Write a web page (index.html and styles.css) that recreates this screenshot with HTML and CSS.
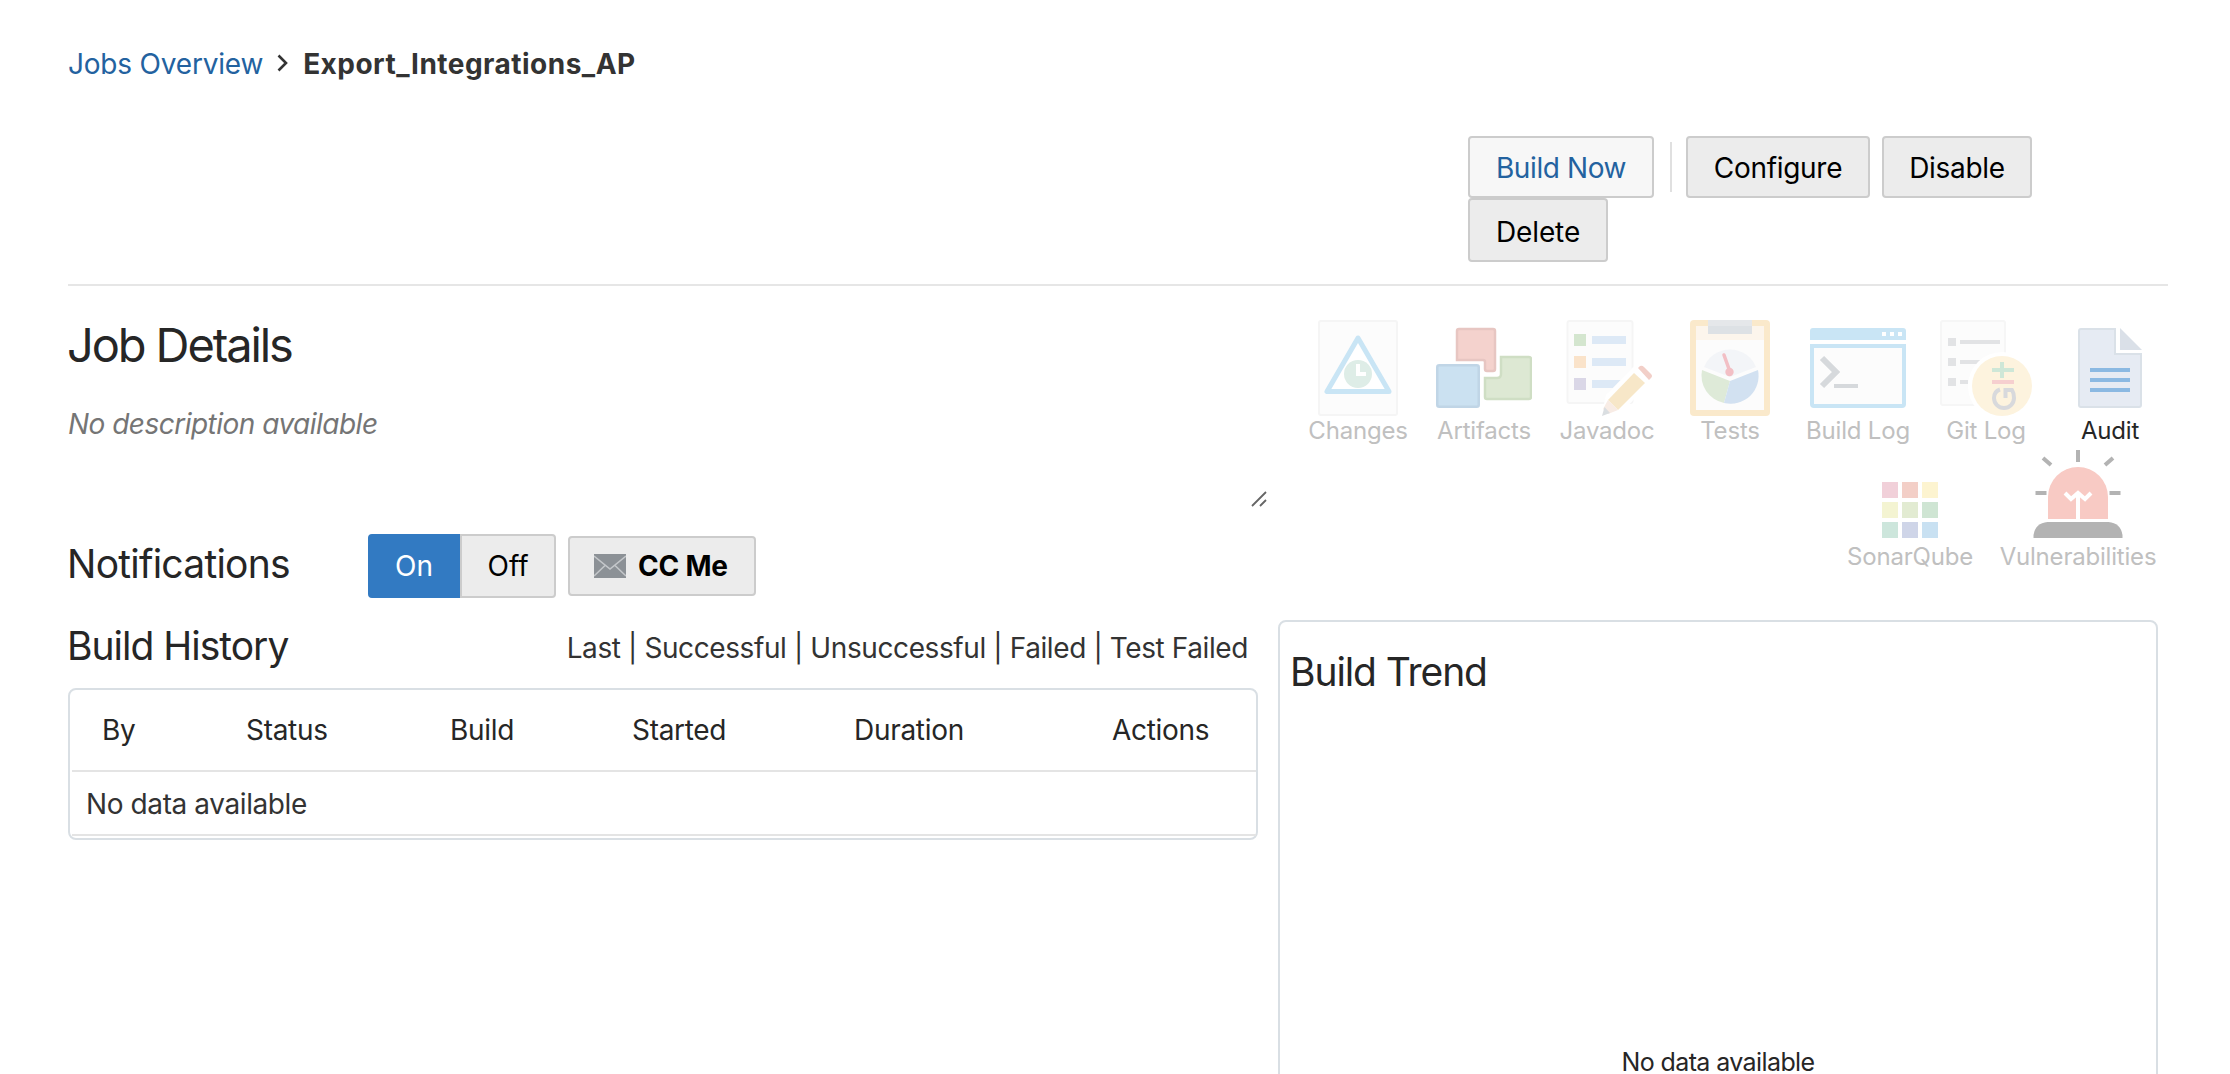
FILE: index.html
```html
<!DOCTYPE html>
<html lang="en">
<head>
<meta charset="utf-8">
<title>Export_Integrations_AP</title>
<link rel="stylesheet" href="styles.css">
</head>
<body>
<div class="page">
  <nav class="breadcrumb">
    <a class="crumb-link" href="#">Jobs Overview</a>
    <svg class="crumb-arrow" width="12" height="18" viewBox="0 0 12 18"><path d="M1.500 1.500 9 9l-7.500 7.500" fill="none" stroke="#333" stroke-width="2.600"/></svg>
    <span class="crumb-current">Export_Integrations_AP</span>
  </nav>

  <div class="toolbar">
    <div class="toolbar-row">
      <button class="btn btn-primary build">Build Now</button>
      <span class="separator"></span>
      <button class="btn configure">Configure</button>
      <button class="btn disable">Disable</button>
    </div>
    <button class="btn delete">Delete</button>
  </div>

  <main class="columns">
    <section class="left">
      <h1>Job Details</h1>
      <div class="description"><em>No description available</em>
        <svg class="grip" width="16" height="16" viewBox="0 0 16 16"><path d="M1 15 15 1M9 15l6-6" stroke="#666" stroke-width="1.800"/></svg>
      </div>

      <div class="notifications">
        <h2 class="notifications-title">Notifications</h2>
        <div class="toggle"><button class="on">On</button><button class="off">Off</button></div>
        <button class="cc">
          <svg width="32" height="24" viewBox="0 0 32 24"><path d="M0 0h32v24H0z" fill="#8c9196"/><path d="M0 2l16 13L32 2M0 22l11-10.500M32 22 21 11.500" fill="none" stroke="#c4c7ca" stroke-width="1.600"/></svg>
          <span>CC Me</span>
        </button>
      </div>

      <div class="history-head">
        <h2>Build History</h2>
        <div class="filters">Last | Successful | Unsuccessful | Failed | Test Failed</div>
      </div>
      <div class="history">
        <div class="history-row history-cols">
          <span>By</span><span>Status</span><span>Build</span><span>Started</span><span>Duration</span><span>Actions</span>
        </div>
        <div class="history-row history-empty">No data available</div>
      </div>
    </section>

    <section class="right">
      <div class="shortcuts">
        <a class="item w128"><svg width="96" height="96" viewBox="0 0 96 96"><rect x="9" y="1" width="78" height="94" rx="2" fill="#fcfcfc" stroke="#f5f5f5" stroke-width="2"/><path d="M48 18 17 71.500h62z" fill="#fff" stroke="#c9e5f5" stroke-width="5" stroke-linejoin="round"/><circle cx="48" cy="54" r="14" fill="#deede7"/><path d="M48 44v10h8" fill="none" stroke="#fff" stroke-width="4"/></svg><span>Changes</span></a>
        <a class="item w124"><svg width="96" height="96" viewBox="0 0 96 96"><path d="M23 9h34q2 0 2 2v38q0 2-2 2h-6q-2 0-2-2v-7q0-2-2-2H21V11q0-2 2-2z" fill="#f4d2cd" stroke="#e7c6c2" stroke-width="2.500"/><rect x="1.250" y="45.250" width="41.500" height="41.500" rx="2" fill="#cbe1f1" stroke="#c0d5e6" stroke-width="2.500"/><path d="M65 37h28q2 0 2 2v38q0 2-2 2H51q-2 0-2-2V58h12q4 0 4-4z" fill="#dde8d3" stroke="#cfdec4" stroke-width="2.500"/></svg><span>Artifacts</span></a>
        <a class="item w122"><svg width="96" height="96" viewBox="0 0 96 96"><rect x="8.500" y="1" width="65" height="82" rx="2" fill="#fcfcfc" stroke="#f5f5f5" stroke-width="2"/><path d="M15 14h12v12H15z" fill="#d4e6cf"/><path d="M15 36h12v12H15z" fill="#fae3ca"/><path d="M15 58h12v12H15z" fill="#dad7e7"/><path d="M33 16h34v8H33zM33 38h34v8H33zM33 60h34v8H33z" fill="#dde9f6"/><path d="M42 97 47 75 79 42l17 14-36 40z" fill="#fff"/><path d="m75 53 11 10-27 27-10-10z" fill="#f7e7c8"/><path d="m49 80 10 10-10 4-5-5z" fill="#f8ece5"/><path d="m45.500 87 5.500 6-8 3z" fill="#dadee1"/><path d="m79 48 2-2q2-1 4 1l7 7q2 2 0 4l-2 2z" fill="#f2cfc8"/></svg><span>Javadoc</span></a>
        <a class="item w124"><svg width="96" height="96" viewBox="0 0 96 96"><rect x="8" width="80" height="96" rx="4" fill="#fae9cb"/><path d="M14 6h68v84H14z" fill="#fcfcfc"/><path d="M14 6h68v14H14z" fill="#fcf5ec"/><path d="M26 0h44v14H26z" fill="#dde1e5"/><path d="M26 0h44v6H26z" fill="#e5e7ea"/><path d="M48 57 22 47a28 28 0 0 1 52 0z" fill="#f3f5f8"/><path d="M48 61 20 50a28 28 0 0 0 22 33z" fill="#deead8"/><path d="M48 61 76 50a28 28 0 0 1-34 33z" fill="#d2e1f1"/><path d="m42 35 5 14" stroke="#f2bfc5" stroke-width="3.500" stroke-linecap="round"/><circle cx="47.500" cy="52" r="4.200" fill="#f2bfc5"/></svg><span>Tests</span></a>
        <a class="item w132"><svg width="96" height="96" viewBox="0 0 96 96"><path d="M0 20v-9q0-3 3-3h90q3 0 3 3v9z" fill="#c9e5f5"/><path d="M72 12h4v4h-4zM80 12h4v4h-4zM88 12h4v4h-4z" fill="#fff"/><path d="M2 26h92v58q0 2-2 2H4q-2 0-2-2z" fill="#fcfcfc" stroke="#c9e5f5" stroke-width="4"/><path d="m12 38 14 14-14 14" fill="none" stroke="#d6d9dc" stroke-width="6"/><path d="M24 64h24v4H24z" fill="#d6d9dc"/></svg><span>Build Log</span></a>
        <a class="item w124"><svg width="96" height="96" viewBox="0 0 96 96"><rect x="3" y="1" width="64" height="84" rx="2" fill="#fcfcfc" stroke="#f6f6f6" stroke-width="2"/><path d="M10 18h8v8h-8zM10 38h8v8h-8zM10 58h8v8h-8zM22 20h40v4H22zM22 40h26v4H22zM22 60h8v4h-8z" fill="#e2e3e5"/><circle cx="64" cy="66" r="34" fill="#fff"/><circle cx="64" cy="66" r="30" fill="#fdf3de"/><path d="M54 50h22M64 42v16" stroke="#cee7d7" stroke-width="4"/><path d="M54 62h22" stroke="#f6cfcf" stroke-width="4"/><path d="M62 69.500q-6 2-6 8.500a10 10 0 0 0 20 0q0-5-2-8h-6.500v8" fill="none" stroke="#d8d9dc" stroke-width="4"/></svg><span>Git Log</span></a>
        <a class="item w124 active"><svg width="96" height="96" viewBox="0 0 96 96"><path d="M19 9h34v25h26v51q0 2-2 2H19q-2 0-2-2V11q0-2 2-2z" fill="#e6ebf3" stroke="#dae1e8" stroke-width="2"/><path d="M58 8v22h22z" fill="#dae0e8"/><path d="M28 50h40M28 60h40M28 70h40" stroke="#8bb9e2" stroke-width="4"/></svg><span>Audit</span></a>
        <a class="item w148"><svg width="96" height="96" viewBox="0 0 96 96"><path d="M20 36h16v16H20z" fill="#f1d0d9"/><path d="M40 36h16v16H40z" fill="#f3cfc7"/><path d="M60 36h16v16H60z" fill="#fdf4d0"/><path d="M20 56h16v16H20z" fill="#f4f4d2"/><path d="M40 56h16v16H40z" fill="#e2ebd2"/><path d="M60 56h16v16H60z" fill="#cfe5d3"/><path d="M20 76h16v16H20z" fill="#cde6dc"/><path d="M40 76h16v16H40z" fill="#cfd5e8"/><path d="M60 76h16v16H60z" fill="#c9e1f2"/></svg><span>SonarQube</span></a>
        <a class="item w188"><svg width="96" height="96" viewBox="0 0 96 96"><path d="M48 4v12M13 12l8 7M83 12l-8 7M5.500 47h11M79.500 47h11" stroke="#b3b3b3" stroke-width="4"/><path d="M18 73V51a30 30 0 0 1 60 0v22z" fill="#f8cac4"/><path d="M48 73V47M35 47l6 6 7-6 7 6 6-6" fill="none" stroke="#fff" stroke-width="4"/><path d="M3.500 92v-3q2-12 14-13h61q12 1 14 13v3z" fill="#b3b3b3"/></svg><span>Vulnerabilities</span></a>
      </div>
      <div class="trend">
        <h2>Build Trend</h2>
        <p>No data available</p>
      </div>
    </section>
  </main>
</div>
</body>
</html>
```
FILE: styles.css
```css
* { box-sizing: border-box; }
body { margin: 0; background: #fff; color: #333; font: 28px/40px Inter, "Liberation Sans", sans-serif; }
a { text-decoration: none; }
h1, h2, p { margin: 0; font-weight: 400; color: #262626; }
button { margin: 0; padding: 0; font: inherit; color: #000; background: #ececec; border: 2px solid #ccc; border-radius: 4px; }
.page { width: 2230px; height: 1074px; padding: 0 62px 0 68px; overflow: hidden; }

.breadcrumb { display: flex; align-items: flex-start; height: 136px; padding-top: 44px; }
.crumb-link { color: #23629f; letter-spacing: -0.2px; }
.crumb-arrow { margin: 10px 14px 0 14px; }
.crumb-current { font-weight: 700; letter-spacing: 0.48px; }

.toolbar { height: 150px; padding-left: 1400px; border-bottom: 2px solid #e6e6e6; }
.toolbar-row { display: flex; height: 62px; }
.btn { display: block; height: 62px; padding-top: 1px; line-height: 56px; letter-spacing: -0.3px; }
.btn-primary { color: #23629f; background: #f7f7f7; }
.build { width: 186px; letter-spacing: -0.4px; }
.separator { width: 2px; height: 50px; margin: 6px 14px 0 16px; background: #e0e0e0; }
.configure { width: 184px; margin-right: 12px; }
.disable { width: 150px; }
.delete { width: 140px; height: 64px; padding-top: 3px; letter-spacing: -0.1px; }

.columns { display: grid; grid-template-columns: 1200px 880px; column-gap: 10px; }
.left { padding-top: 31px; }
h1 { margin-left: -1px; font-size: 47px; line-height: 56px; letter-spacing: -2.1px; }
h2 { margin-left: -1px; font-size: 39px; line-height: 48px; letter-spacing: -1px; }
.description { position: relative; height: 161px; padding-top: 31px; color: #757575; letter-spacing: -0.52px; }
.grip { position: absolute; left: 1183px; top: 118px; }

.notifications { display: flex; align-items: center; height: 64px; }
.notifications-title { width: 301px; margin-bottom: 5px; letter-spacing: -0.75px; }
.toggle { display: flex; margin-right: 12px; }
.toggle button { height: 64px; }
.toggle .on { width: 92px; color: #fff; background: #327ac2; border-color: #327ac2; border-radius: 4px 0 0 4px; }
.toggle .off { width: 96px; border-radius: 0 4px 4px 0; }
.cc { display: flex; align-items: center; gap: 12px; width: 188px; height: 60px; padding-left: 24px; font-weight: 700; letter-spacing: -0.2px; }

.history-head { display: flex; justify-content: space-between; width: 1180px; height: 90px; padding-top: 24px; }
.filters { padding-top: 6px; letter-spacing: -0.4px; }
.history { width: 1190px; height: 152px; padding-left: 2px; border: 2px solid #d9dfe4; border-radius: 8px; }
.history-row { border-bottom: 2px solid #e4e4e4; letter-spacing: -0.3px; }
.history-cols { display: grid; grid-template-columns: 144px 204px 182px 222px 258px 1fr; height: 82px; padding: 20px 0 0 30px; color: #262626; }
.history-empty { height: 64px; padding: 12px 0 0 14px; letter-spacing: -0.4px; }

.shortcuts { display: flex; flex-wrap: wrap; justify-content: flex-end; width: 894px; height: 334px; padding-top: 34px; align-content: flex-start; }
.item { display: flex; flex-direction: column; align-items: center; height: 126px; font-size: 24px; line-height: 30px; letter-spacing: -0.2px; color: #c0c0c0; }
.item.active { color: #262626; }
.item svg { flex: none; }
.w122 { width: 122px; }
.w124 { width: 124px; }
.w128 { width: 128px; }
.w132 { width: 132px; }
.w148 { width: 148px; }
.w188 { width: 188px; }

.trend { width: 880px; height: 500px; padding-top: 26px; border: 2px solid #d9dfe4; border-radius: 8px; }
.trend h2 { padding-left: 11px; letter-spacing: -1.1px; }
.trend p { margin-top: 350px; font-size: 25px; line-height: 32px; text-align: center; letter-spacing: -0.6px; }
```
